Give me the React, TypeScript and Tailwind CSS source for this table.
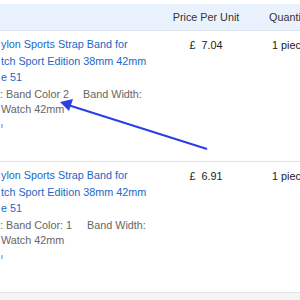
const font = { fontFamily: '"Liberation Sans", Arial, sans-serif' }

const rows = [
  { color: 'Band Color 2', gap: 'ml-[14px]', price: '7.04' },
  { color: 'Band Color: 1', gap: 'ml-[15px]', price: '6.91' },
]

export default function App() {
  return (
    <div className="relative w-[300px] h-[300px] overflow-hidden bg-white text-[10.8px]" style={font}>
      <div className="pt-[4px]">
        {/* Header */}
        <div className="grid grid-cols-[160px_92px_1fr] h-[27px] items-center bg-[#eaf3fd] border-b border-[#dfe6ee] text-[#333]">
          <div />
          <div className="text-center">Price Per Unit</div>
          <div className="pl-[17px] whitespace-nowrap">Quantity</div>
        </div>

        {rows.map((r, i) => (
          <div key={i} className="grid grid-cols-[160px_92px_1fr] h-[131px] border-b border-[#e3e3e3]">
            <div className="pt-[5px] pl-[1px] leading-[16.5px] whitespace-nowrap">
              <div className="text-[#2167c7]">ylon Sports Strap Band for</div>
              <div className="text-[#2167c7]">tch Sport Edition 38mm 42mm</div>
              <div className="text-[#2167c7]">e 51</div>
              <div className="text-[#666] mt-[1px] leading-[15.5px]">
                <span className="-ml-[1px]">: {r.color}</span>
                <span className={r.gap}>Band Width:</span>
              </div>
              <div className="text-[#666] leading-[15.5px]">Watch 42mm</div>
              <div className="mt-[6px] w-[2px] h-[4px] bg-[#9cc8f2]" />
            </div>
            <div className="pt-[6px] text-center text-[#222] whitespace-nowrap">£&nbsp; {r.price}</div>
            <div className="pt-[6px] pl-[20px] text-[#222] whitespace-nowrap">1 piece</div>
          </div>
        ))}
        <div className="h-[10px] bg-[#f4f4f4]" />
      </div>

      {/* annotation arrow */}
      <svg className="absolute left-0 top-0 pointer-events-none" width="300" height="300">
        <line x1="207" y1="149" x2="68" y2="105" stroke="#2a3ee6" strokeWidth="2" />
        <polygon points="60,102 73,99 69,111" fill="#2a3ee6" />
      </svg>
    </div>
  )
}
